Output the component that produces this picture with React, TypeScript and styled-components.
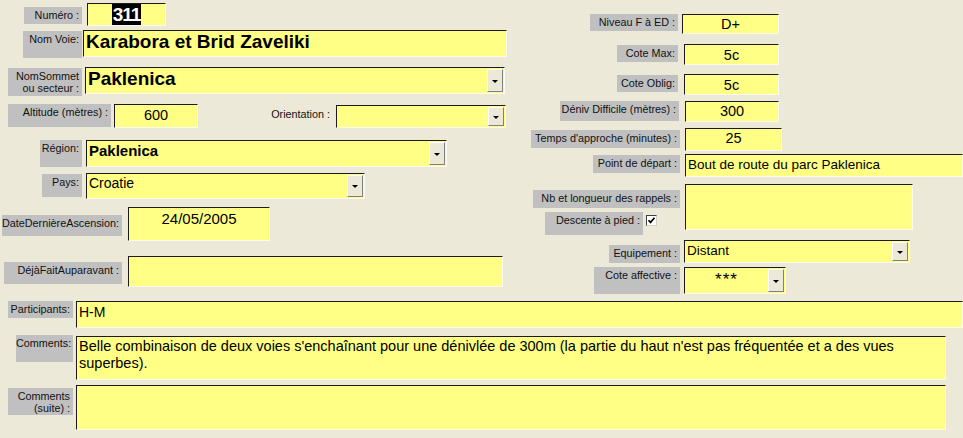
import styled, { createGlobalStyle } from "styled-components";

const GlobalStyle = createGlobalStyle`
  html, body {
    margin: 0;
    padding: 0;
    background: #ece9d8;
  }
`;

const Page = styled.div`
  width: 963px;
  height: 438px;
  overflow: hidden;
  background: #ece9d8;
  font-family: "Liberation Sans", Arial, sans-serif;
  color: #000;
`;

const Top = styled.div`
  display: grid;
  grid-template-columns: 520px 443px;
`;

const Column = styled.div`
  display: flex;
  flex-direction: column;
`;

const Row = styled.div<{ $h: number; $x: number }>`
  display: flex;
  align-items: flex-start;
  height: ${({ $h }) => $h}px;
  padding-left: ${({ $x }) => $x}px;
  box-sizing: border-box;
`;

const Label = styled.div<{
  $w: number;
  $h: number;
  $mt?: number;
  $gap?: number;
  $bare?: boolean;
}>`
  flex: none;
  box-sizing: border-box;
  width: ${({ $w }) => $w}px;
  height: ${({ $h }) => $h}px;
  margin-top: ${({ $mt }) => $mt ?? 0}px;
  margin-right: ${({ $gap }) => $gap ?? 4}px;
  padding: 2px 3px 0 0;
  background: ${({ $bare }) => ($bare ? "transparent" : "#c0c0c0")};
  color: #111;
  font-size: 10.8px;
  line-height: 12px;
  text-align: right;
  white-space: nowrap;
`;

const LabelStack = styled.div`
  flex: none;
  display: flex;
  flex-direction: column;
  width: 147px;
  margin-right: 5px;
`;

const SubRow = styled.div`
  display: flex;
  align-items: flex-start;
  padding-left: 12px;
`;

const Input = styled.div<{ $w: number; $h: number; $mt?: number; $gap?: number }>`
  flex: none;
  display: flex;
  align-items: flex-start;
  box-sizing: border-box;
  width: ${({ $w }) => $w}px;
  height: ${({ $h }) => $h}px;
  margin-top: ${({ $mt }) => $mt ?? 0}px;
  margin-right: ${({ $gap }) => $gap ?? 0}px;
  background: #ffff86;
  border: 1px solid;
  border-color: #1c1c1c #fbfbf0 #fbfbf0 #1c1c1c;
  overflow: hidden;
`;

const Text = styled.div<{
  $size?: number;
  $bold?: boolean;
  $center?: boolean;
  $pt?: number;
  $lh?: number;
  $spacing?: number;
}>`
  flex: 1;
  min-width: 0;
  padding: ${({ $pt }) => $pt ?? 1}px 2px 0;
  font-size: ${({ $size }) => $size ?? 14}px;
  font-weight: ${({ $bold }) => ($bold ? 700 : 400)};
  line-height: ${({ $lh, $size }) => $lh ?? ($size ?? 14) + 3}px;
  letter-spacing: ${({ $spacing }) => $spacing ?? 0}px;
  text-align: ${({ $center }) => ($center ? "center" : "left")};
  white-space: ${({ $lh }) => ($lh ? "normal" : "nowrap")};
`;

const Selected = styled.span`
  display: inline-block;
  padding: 0 1px;
  background: #000;
  color: #fff;
  line-height: 21px;
  letter-spacing: -1px;
`;

const DropButton = styled.div`
  flex: none;
  position: relative;
  align-self: stretch;
  width: 14px;
  margin: 1px 1px 1px 0;
  background: #ece9d8;
  border: 1px solid;
  border-color: #fff #808080 #808080 #fff;

  &::after {
    content: "";
    position: absolute;
    left: 50%;
    top: 50%;
    margin: -1px 0 0 -3px;
    border-left: 3px solid transparent;
    border-right: 3px solid transparent;
    border-top: 3px solid #000;
  }
`;

const Check = styled.div<{ $mt?: number }>`
  flex: none;
  display: flex;
  align-items: center;
  justify-content: center;
  box-sizing: border-box;
  width: 11px;
  height: 11px;
  margin-top: ${({ $mt }) => $mt ?? 0}px;
  background: #fff;
  border: 1px solid;
  border-color: #404040 #d4d0c8 #d4d0c8 #404040;
`;

const Bottom = styled.div`
  display: flex;
  flex-direction: column;
`;

export default function App() {
  return (
    <Page>
      <GlobalStyle />
      <Top>
        <Column>
          <Row $h={30} $x={24}>
            <Label $w={58} $h={17} $mt={7} $gap={5}>Numéro :</Label>
            <Input $w={79} $h={23} $mt={3}>
              <Text $size={19} $bold $center $pt={0} $lh={21}>
                <Selected>311</Selected>
              </Text>
            </Input>
          </Row>
          <Row $h={37} $x={23}>
            <Label $w={59} $h={27} $mt={1} $gap={1}>Nom Voie:</Label>
            <Input $w={424} $h={27}>
              <Text $size={19} $bold $pt={0}>Karabora et Brid Zaveliki</Text>
            </Input>
          </Row>
          <Row $h={37} $x={8}>
            <Label $w={74} $h={28} $mt={1} $gap={3}>
              NomSommet
              <br />
              ou secteur :
            </Label>
            <Input $w={420} $h={27}>
              <Text $size={19} $bold $pt={0}>Paklenica</Text>
              <DropButton />
            </Input>
          </Row>
          <Row $h={36} $x={8}>
            <Label $w={103} $h={23} $gap={3}>Altitude (mètres) :</Label>
            <Input $w={84} $h={24} $gap={67}>
              <Text $size={14.5} $center $pt={2}>600</Text>
            </Input>
            <Label $w={68} $h={20} $mt={2} $gap={3} $bare>Orientation :</Label>
            <Input $w={170} $h={23} $mt={1}>
              <Text />
              <DropButton />
            </Input>
          </Row>
          <Row $h={33} $x={40}>
            <Label $w={42} $h={27}>Région:</Label>
            <Input $w={361} $h={27}>
              <Text $size={15} $bold>Paklenica</Text>
              <DropButton />
            </Input>
          </Row>
          <Row $h={34} $x={42}>
            <Label $w={40} $h={23} $mt={1}>Pays:</Label>
            <Input $w={279} $h={26}>
              <Text>Croatie</Text>
              <DropButton />
            </Input>
          </Row>
          <Row $h={49} $x={2}>
            <Label $w={120} $h={21} $mt={8} $gap={6}>DateDernièreAscension:</Label>
            <Input $w={142} $h={34}>
              <Text $size={15} $center $pt={2}>24/05/2005</Text>
            </Input>
          </Row>
          <Row $h={45} $x={4}>
            <Label $w={118} $h={22} $mt={6} $gap={6}>DéjàFaitAuparavant :</Label>
            <Input $w={375} $h={31} />
          </Row>
        </Column>

        <Column>
          <Row $h={44} $x={70}>
            <Label $w={88} $h={17} $mt={14}>Niveau F à ED :</Label>
            <Input $w={97} $h={20} $mt={14}>
              <Text $size={14.5} $center $pt={1}>D+</Text>
            </Input>
          </Row>
          <Row $h={30} $x={97}>
            <Label $w={61} $h={17} $mt={1} $gap={6}>Cote Max:</Label>
            <Input $w={95} $h={21}>
              <Text $size={14.5} $center $pt={2}>5c</Text>
            </Input>
          </Row>
          <Row $h={27} $x={97}>
            <Label $w={61} $h={17} $mt={1} $gap={6}>Cote Oblig:</Label>
            <Input $w={95} $h={21}>
              <Text $size={14.5} $center $pt={2}>5c</Text>
            </Input>
          </Row>
          <Row $h={27} $x={40}>
            <Label $w={119} $h={20} $gap={6}>Déniv Difficile (mètres) :</Label>
            <Input $w={94} $h={21}>
              <Text $size={14.5} $center $pt={1}>300</Text>
            </Input>
          </Row>
          <Row $h={26} $x={11}>
            <Label $w={149} $h={18} $mt={2} $gap={5}>Temps d'approche (minutes) :</Label>
            <Input $w={97} $h={23}>
              <Text $size={14.5} $center $pt={1}>25</Text>
            </Input>
          </Row>
          <Row $h={30} $x={73}>
            <Label $w={87} $h={18} $mt={1} $gap={5}>Point de départ :</Label>
            <Input $w={278} $h={23}>
              <Text $size={13.5} $pt={2}>Bout de route du parc Paklenica</Text>
            </Input>
          </Row>
          <Row $h={56} $x={13}>
            <LabelStack>
              <Label $w={147} $h={18} $mt={6} $gap={0}>Nb et longueur des rappels :</Label>
              <SubRow>
                <Label $w={98} $h={23} $mt={4} $gap={3}>Descente à pied :</Label>
                <Check $mt={7}>
                  <svg width="9" height="9" viewBox="0 0 9 9">
                    <path d="M1.5 4.2 L3.5 6.4 L7.5 1.8" fill="none" stroke="#000" strokeWidth="1.7" />
                  </svg>
                </Check>
              </SubRow>
            </LabelStack>
            <Input $w={228} $h={46} />
          </Row>
          <Row $h={27} $x={89}>
            <Label $w={71} $h={18} $mt={5}>Equipement :</Label>
            <Input $w={226} $h={23}>
              <Text $size={13.5} $pt={2}>Distant</Text>
              <DropButton />
            </Input>
          </Row>
          <Row $h={34} $x={74}>
            <Label $w={86} $h={27}>Cote affective :</Label>
            <Input $w={102} $h={27}>
              <Text $center $size={17} $pt={2} $spacing={1}>***</Text>
              <DropButton />
            </Input>
          </Row>
        </Column>
      </Top>

      <Bottom>
        <Row $h={34} $x={8}>
          <Label $w={65} $h={17} $gap={3}>Participants:</Label>
          <Input $w={887} $h={27}>
            <Text $pt={2}>H-M</Text>
          </Input>
        </Row>
        <Row $h={50} $x={16}>
          <Label $w={57} $h={27} $gap={3}>Comments:</Label>
          <Input $w={870} $h={44} $mt={1}>
            <Text $size={14.5} $pt={1} $lh={17}>
              Belle combinaison de deux voies s'enchaînant pour une dénivlée de 300m (la partie du haut
              n'est pas fréquentée et a des vues superbes).
            </Text>
          </Input>
        </Row>
        <Row $h={53} $x={8}>
          <Label $w={65} $h={27} $mt={3} $gap={3}>
            Comments
            <br />
            (suite) :
          </Label>
          <Input $w={870} $h={45} />
        </Row>
      </Bottom>
    </Page>
  );
}
